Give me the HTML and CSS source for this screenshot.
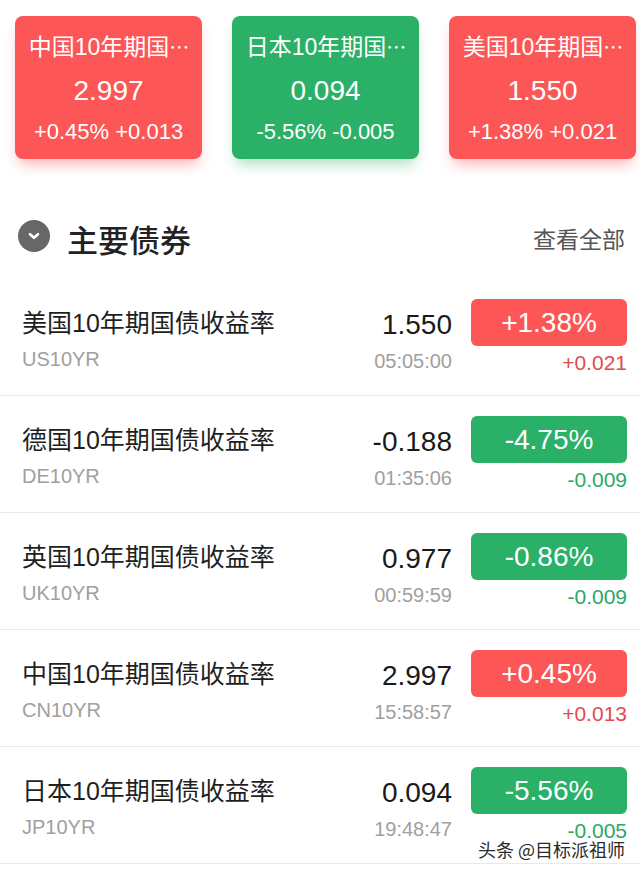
FILE: index.html
```html
<!DOCTYPE html>
<html lang="zh-CN">
<head>
<meta charset="utf-8">
<title>主要债券</title>
<link rel="stylesheet" href="styles.css">
</head>
<body>
<div class="page">
  <div class="cards">
    <div class="card up">
      <div class="card-title">中国10年期国<span class="ell">⋯</span></div>
      <div class="card-value">2.997</div>
      <div class="card-change">+0.45% +0.013</div>
    </div>
    <div class="card down">
      <div class="card-title">日本10年期国<span class="ell">⋯</span></div>
      <div class="card-value">0.094</div>
      <div class="card-change">-5.56% -0.005</div>
    </div>
    <div class="card up">
      <div class="card-title">美国10年期国<span class="ell">⋯</span></div>
      <div class="card-value">1.550</div>
      <div class="card-change">+1.38% +0.021</div>
    </div>
  </div>

  <div class="section-head">
    <span class="toggle">
      <svg width="32" height="32" viewBox="0 0 32 32"><circle cx="16" cy="16" r="16" fill="#676767"/><path d="M12 14.2 L16 17.8 L20 14.2" fill="none" stroke="#fff" stroke-width="2.6" stroke-linecap="round" stroke-linejoin="round"/></svg>
    </span>
    <span class="section-title">主要债券</span>
    <span class="more">查看全部</span>
  </div>

  <div class="list">
    <div class="row">
      <div class="col-name"><div class="name">美国10年期国债收益率</div><div class="code">US10YR</div></div>
      <div class="col-price"><div class="price">1.550</div><div class="time">05:05:00</div></div>
      <div class="col-chg"><div class="badge up">+1.38%</div><div class="delta up-t">+0.021</div></div>
    </div>
    <div class="row">
      <div class="col-name"><div class="name">德国10年期国债收益率</div><div class="code">DE10YR</div></div>
      <div class="col-price"><div class="price">-0.188</div><div class="time">01:35:06</div></div>
      <div class="col-chg"><div class="badge down">-4.75%</div><div class="delta down-t">-0.009</div></div>
    </div>
    <div class="row">
      <div class="col-name"><div class="name">英国10年期国债收益率</div><div class="code">UK10YR</div></div>
      <div class="col-price"><div class="price">0.977</div><div class="time">00:59:59</div></div>
      <div class="col-chg"><div class="badge down">-0.86%</div><div class="delta down-t">-0.009</div></div>
    </div>
    <div class="row">
      <div class="col-name"><div class="name">中国10年期国债收益率</div><div class="code">CN10YR</div></div>
      <div class="col-price"><div class="price">2.997</div><div class="time">15:58:57</div></div>
      <div class="col-chg"><div class="badge up">+0.45%</div><div class="delta up-t">+0.013</div></div>
    </div>
    <div class="row">
      <div class="col-name"><div class="name">日本10年期国债收益率</div><div class="code">JP10YR</div></div>
      <div class="col-price"><div class="price">0.094</div><div class="time">19:48:47</div></div>
      <div class="col-chg"><div class="badge down">-5.56%</div><div class="delta down-t">-0.005</div></div>
    </div>
  </div>

  <div class="watermark">头条 @目标派祖师</div>
</div>
</body>
</html>
```

FILE: styles.css
```css
* { box-sizing: border-box; }
html, body { margin: 0; padding: 0; background: #fff; }
body {
  font-family: "Liberation Sans", "Noto Sans CJK SC", sans-serif;
  color: #1c1c1c;
}
.page { position: relative; width: 640px; height: 872px; overflow: hidden; }

.cards {
  display: flex;
  gap: 30px;
  padding: 16px 0 0 15px;
}
.card {
  width: 187px;
  height: 143px;
  border-radius: 8px;
  color: #fff;
  text-align: center;
  padding-top: 16px;
}
.card.up { background: #fd5656; box-shadow: 0 9px 14px -4px rgba(253, 86, 86, 0.45); }
.card.down { background: #2bb067; box-shadow: 0 9px 14px -4px rgba(43, 176, 103, 0.4); }
.card-title { font-size: 23px; line-height: 30px; white-space: nowrap; }
.ell { font-size: 20px; letter-spacing: -1px; }
.card-value { font-size: 28px; line-height: 36px; margin-top: 10px; }
.card-change { font-size: 22px; line-height: 30px; margin-top: 8px; }

.section-head {
  display: flex;
  align-items: center;
  height: 56px;
  margin-top: 51px;
  padding: 0 15px 0 18px;
}
.toggle { display: flex; width: 32px; height: 32px; margin-top: -4px; }
.section-title {
  font-size: 31px;
  font-weight: 500;
  color: #222;
  margin-left: 17px;
  margin-top: 0;
}
.more { margin-left: auto; font-size: 23px; color: #555; }

.list { margin-top: 13px; }
.row {
  display: flex;
  align-items: flex-start;
  height: 117px;
  border-bottom: 1px solid #e9e9e9;
  padding: 0 13px 0 22px;
}
.col-name { flex: 1; padding-top: 28px; }
.name { font-size: 25px; line-height: 32px; color: #1f1f1f; white-space: nowrap; }
.code { font-size: 20px; line-height: 28px; color: #a0a0a0; margin-top: 6px; }

.col-price { text-align: right; padding-top: 28px; }
.price { font-size: 28px; line-height: 36px; color: #1a1a1a; }
.time { font-size: 20px; line-height: 28px; color: #a0a0a0; margin-top: 4px; }

.col-chg { width: 156px; margin-left: 19px; padding-top: 20px; text-align: right; }
.badge {
  height: 47px;
  line-height: 48px;
  border-radius: 6px;
  text-align: center;
  color: #fff;
  font-size: 28px;
}
.badge.up { background: #fd5656; }
.badge.down { background: #2bb067; }
.delta { font-size: 21px; line-height: 28px; margin-top: 3px; }
.up-t { color: #e5484d; }
.down-t { color: #2aa865; }

.watermark {
  position: absolute;
  right: 15px;
  top: 837px;
  font-family: "Noto Sans CJK SC", sans-serif;
  font-size: 18px;
  line-height: 24px;
  color: #2a2a2a;
  text-shadow: 0 0 2px #fff, 0 0 2px #fff, 0 0 3px #fff;
}
```
